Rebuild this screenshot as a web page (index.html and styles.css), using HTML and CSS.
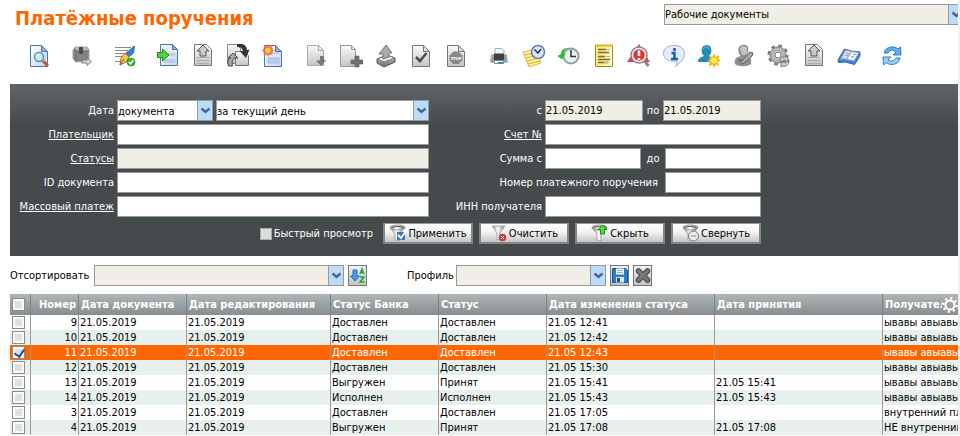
FILE: index.html
```html
<!DOCTYPE html>
<html lang="ru">
<head>
<meta charset="utf-8">
<title>Платёжные поручения</title>
<link rel="stylesheet" href="styles.css">
</head>
<body>
<svg class="defs" aria-hidden="true">
  <defs>
    <linearGradient id="gGray" x1="0" y1="0" x2="0" y2="1"><stop offset="0" stop-color="#fafafa"/><stop offset="1" stop-color="#c4c4c4"/></linearGradient>
    <linearGradient id="gDark" x1="0" y1="0" x2="0" y2="1"><stop offset="0" stop-color="#c8c8c8"/><stop offset="1" stop-color="#6c6c6c"/></linearGradient>
    <linearGradient id="gBlue" x1="0" y1="0" x2="1" y2="1"><stop offset="0" stop-color="#ffffff"/><stop offset="1" stop-color="#c3d4f0"/></linearGradient>
    <linearGradient id="gGold" x1="0" y1="0" x2="1" y2="0"><stop offset="0" stop-color="#f9e27a"/><stop offset="1" stop-color="#fffbe0"/></linearGradient>
    <linearGradient id="gFun" x1="0" y1="0" x2="1" y2="0"><stop offset="0" stop-color="#888"/><stop offset=".45" stop-color="#fff"/><stop offset="1" stop-color="#777"/></linearGradient>
    <symbol id="pageBlue" viewBox="0 0 24 24"><path d="M3.500 1.500h11l6 6v15h-17z" fill="url(#gBlue)" stroke="#5574a6"/><path d="M14.500 1.500v6h6z" fill="#8fb0e0" stroke="#5574a6"/></symbol>
    <symbol id="pageGray" viewBox="0 0 24 24"><path d="M3.500 1.500h11l6 6v15h-17z" fill="url(#gGray)" stroke="#777"/><path d="M14.500 1.500v6h6z" fill="#ddd" stroke="#777"/></symbol>
    <symbol id="upPage" viewBox="0 0 24 24"><path d="M3.500 .5h12l5 5v16h-17z" fill="url(#gGray)" stroke="#777"/><path d="M6 13.500h12M6 16.500h12M6 19.500h12" stroke="#aaa"/><path d="M12 1l6 6h-3v5H9V7H6z" fill="#c9c9c9" stroke="#555"/></symbol>
    <symbol id="chev" viewBox="0 0 14 19"><path d="M0 0h14v19H0z" fill="#b9dcfb"/><path d="M3.500 7.500L7.500 11l4-3.500" fill="none" stroke="#49658f" stroke-width="2.400"/></symbol>
    <symbol id="funnel" viewBox="0 0 18 18"><path d="M1 4l5 6v6l4 1v-7l6-6z" fill="url(#gFun)" stroke="#888" stroke-width=".6"/><ellipse cx="8.500" cy="3.500" rx="7.500" ry="2.500" fill="url(#gFun)" stroke="#999"/><path d="M3 3.500c3-1.500 8-1.500 11 0" stroke="#555" fill="none"/></symbol>
  </defs>
</svg>
<div class="page">
  <header class="top">
    <h1>Платёжные поручения</h1>
    <span class="pick pick-scope"><select class="field muted" aria-label="Раздел"><option>Рабочие документы</option></select><svg><use href="#chev"/></svg></span>
  </header>

  <nav class="tools" aria-label="Действия">
    <div><button type="button" aria-label="Просмотр"><svg viewBox="0 0 24 24"><use href="#pageBlue"/><path d="M15 16l6 6" stroke="#d8531c" stroke-width="3"/><path d="M15 15l2 2" stroke="#eaa040" stroke-width="3"/><circle cx="12" cy="13" r="4.500" fill="#c5ecfb" stroke="#5a8fc4" stroke-width="1.500"/><path d="M9.500 12a3 3 0 0 1 3-2" stroke="#fff" fill="none"/></svg></button></div>
    <div><button type="button" aria-label="Отправить"><svg viewBox="0 0 24 24"><path d="M5 3h12l2 3v11l-13 1-3-3V6z" fill="#858585" stroke="#a5a5a5"/><path d="M5 3h12l2 4H6z" fill="#b5b5b5"/><path d="M6 7v11M19 7H6L4 5" fill="none" stroke="#6a6a6a"/><path d="M9 3h4v7H9z" fill="#4d4d4d"/><path d="M12 16h5v-2.500l4.500 4-4.500 4V19h-5z" fill="#d4d4d4" stroke="#666" stroke-width=".8"/></svg></button></div>
    <div><button type="button" aria-label="Подписать"><svg viewBox="0 0 24 24"><path d="M2 3.500h16M2 6.500h13M2 9.500h10M2 12.500h7M2 17.500h6" stroke="#888"/><path d="M21.500 2l-1 7-5 4-3.500-3z" fill="#3d7fd0" stroke="#2a62ab"/><path d="M12 9l4 4-3 5-6 3 1-7z" fill="#f5c64a" stroke="#a8731d"/><path d="M7 21l4-6" stroke="#815412"/><circle cx="18" cy="18" r="4" fill="#35b13c" stroke="#218a2a" stroke-width=".6"/><path d="M15.800 18l1.700 1.800 2.800-3.500" fill="none" stroke="#fff" stroke-width="1.500"/></svg></button></div>
    <div>
      <button type="button" aria-label="Импорт"><svg viewBox="0 0 24 24"><path d="M4.500 .5h12l5 5v16h-17z" fill="url(#gBlue)" stroke="#5574a6"/><path d="M16.500 .5v5h5z" fill="#8fb0e0" stroke="#5574a6"/><path d="M12 9h7v3h-7zM8 15h11v4H8z" fill="#bccbe8"/><path d="M1.500 8.500h5V5l6.500 6-6.500 6v-3.500h-5z" fill="#4ed33a" stroke="#188c19"/></svg></button>
      <button type="button" aria-label="Экспорт"><svg viewBox="0 0 24 24"><use href="#upPage"/></svg></button>
      <button type="button" aria-label="Обмен"><svg viewBox="0 0 24 24"><path d="M1.500 .5h9l4 4v15h-13z" fill="url(#gGray)" stroke="#888"/><path d="M9.500 7.500h9l4 4v10h-13z" fill="url(#gGray)" stroke="#777"/><path d="M11 0c7-1 10 2 10 6l2.500-.5L20 14l-6-6.500 3-.5C16 4 14 2.500 11 3z" fill="#333"/><path d="M2.500 22c-1.500-6 .5-8 2.500-8H2l5-5 5 5H9c-2.500 0-3.500 4-2.500 8z" fill="#aaa" stroke="#444"/></svg></button>
      <button type="button" aria-label="Создать"><svg viewBox="0 0 24 24"><use href="#pageBlue"/><path d="M8 9h10M7 14h11v5H7z" fill="#bccbe8" stroke="#a6bbdf"/><circle cx="7" cy="6.500" r="5" fill="#f5552c" opacity=".85"/><path d="M7 0v13M.500 6.500h13M2.500 2l9 9M11.500 2l-9 9" stroke="#f88158"/><circle cx="7" cy="6.500" r="2.800" fill="#ffce35"/></svg></button>
    </div>
    <div>
      <button type="button" aria-label="Шаблон"><svg viewBox="0 0 24 24"><path d="M3.500 1.500h11l5 5v15h-16z" fill="url(#gGray)" stroke="#aaa"/><path d="M14.500 1.500v5h5z" fill="#eee" stroke="#aaa"/><path d="M16 12l4 0v4h2l-4.500 6-5.500-5 4-1z" fill="#777"/></svg></button>
      <button type="button" aria-label="Добавить"><svg viewBox="0 0 24 24"><path d="M1.500 1.500h11l4 4v17h-15z" fill="url(#gGray)" stroke="#999"/><path d="M12.500 1.500v4h4z" fill="#eee" stroke="#999"/><path d="M16 12h4v4h4v4h-4v3h-4v-3h-4v-4h4z" fill="#707070" stroke="#555" stroke-width=".6"/></svg></button>
      <button type="button" aria-label="Выгрузить"><svg viewBox="0 0 24 24"><path d="M3 15l10-4 8 3v4l-11 5-7-4z" fill="url(#gDark)" stroke="#555"/><path d="M3 15l7 3 11-4-8-3z" fill="#e8e8e8" stroke="#777"/><path d="M10 18v4.500" stroke="#777"/><path d="M12 1l6 8h-3v4l-6 2v-5H5z" fill="#aaa" stroke="#777"/></svg></button>
      <button type="button" aria-label="Проверить"><svg viewBox="0 0 24 24"><use href="#pageGray"/><path d="M7 13l4 4 6.500-8" fill="none" stroke="#4c4c4c" stroke-width="2.600"/></svg></button>
      <button type="button" aria-label="Отозвать"><svg viewBox="0 0 24 24"><use href="#pageGray"/><path d="M9.500 7.500h5L18.500 11.500v5L14.500 20h-5L5.500 16.500v-5z" fill="#888"/><text x="12" y="16" class="stop">STOP</text></svg></button>
    </div>
    <div>
      <button type="button" aria-label="Печать"><svg viewBox="0 0 24 24"><path d="M8 4.500h7l2 2v5H8z" fill="#e9f5fa" stroke="#9bb3bd"/><path d="M4.500 10.500h15l1 8h-17z" fill="#999" stroke="#bbb"/><path d="M7 9.500h10v7H7z" fill="#3b4046"/><path d="M7.500 16.500h9v3h-9z" fill="#f5fafd" stroke="#888"/><path d="M11 19h5" stroke="#2d8bc4" stroke-width="2"/></svg></button>
      <button type="button" aria-label="Отложить"><svg viewBox="0 0 24 24"><path d="M1 8l13-3 5 14-12 4z" fill="#fff0a0" stroke="#e3bb3a"/><path d="M3 11l11-3M4 14l12-3M5 17l12-3M6 20l12-3" stroke="#d9ae26"/><circle cx="16" cy="8" r="6.500" fill="#d9e5fb" stroke="#687bb5" stroke-width="1.500"/><path d="M12.500 5.500l3.500 3.500 3-4" fill="none" stroke="#29395f" stroke-width="1.500"/></svg></button>
      <button type="button" aria-label="История"><svg viewBox="0 0 24 24"><circle cx="14" cy="12" r="7.500" fill="#edf1ef" stroke="#93a5a2" stroke-width="2"/><path d="M14 6v6.500h5" fill="none" stroke="#333" stroke-width="1.500"/><path d="M11 4C8 5 6.500 7 6.500 10H8.500L5 15.500.5 12 4 10c0-4 3-6.500 7-6z" fill="#27bd35"/></svg></button>
      <button type="button" aria-label="Журнал"><svg viewBox="0 0 24 24"><path d="M3.500 1.500h17v21h-17z" fill="url(#gGold)" stroke="#a48a1b"/><path d="M3.500 1.500h17" stroke="#e3b90b" stroke-width="2"/><path d="M6 5.500h8M6 8.500h11M6 12.500h7M6 15.500h12M6 18.500h10" stroke="#806b25" stroke-width="1.500"/><path d="M14 5.500h4M14 12.500h4M12 18.500h5" stroke="#d2b84b"/></svg></button>
      <button type="button" aria-label="Ошибки"><svg viewBox="0 0 24 24"><path d="M12 0l11 18H0z" fill="#d8434a"/><path d="M17 16l4.500 6" stroke="#888" stroke-width="3"/><circle cx="12" cy="11" r="8" fill="#d43a41" stroke="#8c8c8c" stroke-width="1.500"/><circle cx="12" cy="11" r="6.500" fill="none" stroke="#eee" stroke-width="1.500"/><path d="M12 6.500v5.500M12 14v2" stroke="#fff" stroke-width="2.500"/></svg></button>
      <button type="button" aria-label="Информация"><svg viewBox="0 0 24 24"><path d="M12 1.500c6 0 10.500 3 10.500 8 0 6-5 10-9 13 2-3 2-4 1-5.500C6 18 1.500 14 1.500 9.500c0-5 4.500-8 10.500-8z" fill="#e8ebfd" stroke="#a3abd8"/><path d="M12.500 4v3M9.500 9h3v6M9 15h7" fill="none" stroke="#1760b8" stroke-width="2.500"/></svg></button>
      <button type="button" aria-label="Новый клиент"><svg viewBox="0 0 24 24"><path d="M1 18c0-4 3-5 6-6-2-2-3-4-2-8 1-4 8-4 9 0 1 4 0 6-2 8 3 1 5 3 5 6z" fill="#218db8"/><path d="M6 5c1-3 5-3 6 0" stroke="#6fc4df" fill="none"/><path d="M17 9l1.500 4 4-2-1.500 4 3 1.500-3.500 1.500 2 4-4-1.500L17 24l-1.500-3.500-4 1.500 1.500-4-3-1.500 3-1.500-1.500-4 4 2z" fill="#ffae12"/><circle cx="17" cy="16.500" r="3" fill="#fff06a"/></svg></button>
      <button type="button" aria-label="Клиент"><svg viewBox="0 0 24 24"><path d="M3 20c-1-5 1-7 6-8-3-2-3-7-2-9 2-3 8-3 9 0s0 7-2 9c4 1 6 3 5 8-3 3-13 3-16 0z" fill="#8e8e8e"/><path d="M8 4c2-3 6-2 7 0v5c-2 3-5 3-6 0z" fill="#c2c2c2"/><path d="M10 20l-3-5 3 2 8-9 3 1-1 3-9 8z" fill="#aaa" stroke="#5c5c5c"/></svg></button>
      <button type="button" aria-label="Настройки"><svg viewBox="0 0 24 24"><circle cx="11" cy="11" r="8.500" fill="none" stroke="#777" stroke-width="4" stroke-dasharray="3.340 3.340"/><circle cx="11" cy="11" r="6" fill="none" stroke="#b4b4b4" stroke-width="5"/><circle cx="11" cy="11" r="8" fill="none" stroke="#858585"/><circle cx="11" cy="11" r="3" fill="#fff" stroke="#777"/><path d="M13 17c0-3 3-5 6-4l1-1 2 5h-5l1-1c-2 0-2 1-2 2zM22 17c0 4-3 6-6 5l-2 1v-5h5l-1 1c1 0 2-1 2-2z" fill="#ccc" stroke="#666" stroke-width=".8"/></svg></button>
      <button type="button" aria-label="Выгрузка"><svg viewBox="0 0 24 24"><use href="#upPage"/></svg></button>
      <button type="button" aria-label="Справочник"><svg viewBox="0 0 24 24"><path d="M1 16L7.500 5l7 2 8.500 1v4l-5.500 8.500-9-2.500-7 .5z" fill="#3c83d8" stroke="#2a61b1"/><path d="M8.500 6l6 1.500-5 8c-2-1-4-1-6 0z" fill="#dde3f3" stroke="#8e9fca"/><path d="M14.500 7.500l7.500 1-5 8.500c-3-1-5-1-7.500-1.500z" fill="#f0f3fc" stroke="#8e9fca"/><path d="M9 9l3 1M8 11l3 1M16 10l3 .5M14 12.500l3 .5" stroke="#99a"/></svg></button>
    </div>
    <div><button type="button" aria-label="Обновить"><svg viewBox="0 0 24 24"><path d="M4 9c1-6 10-8 14-4l2.500-2L21 11h-8l3-3c-3-3-6-2-8 1z" fill="#63adeb" stroke="#2f7ac5"/><path d="M20 14c-1 7-10 8-14 4.500L3.500 21 3 13h8l-3 3c3 2 6 1 8-2z" fill="#9bcdf5" stroke="#2f7ac5"/></svg></button></div>
  </nav>

  <form class="filter">
    <div class="grid">
      <label for="dkind">Дата</label>
      <div class="cell">
        <span class="pick pick-kind"><select class="field" id="dkind"><option>документа</option></select><svg><use href="#chev"/></svg></span>
        <span class="pick pick-period"><select class="field" aria-label="Период"><option>за текущий день</option></select><svg><use href="#chev"/></svg></span>
      </div>
      <label for="from">с</label>
      <div class="cell spread"><input class="field muted date" id="from" value="21.05.2019"><label for="till">по</label><input class="field muted date" id="till" value="21.05.2019"></div>

      <a href="#payer">Плательщик</a>
      <input class="field" id="payer" aria-label="Плательщик">
      <a href="#account">Счет №</a>
      <input class="field" id="account" aria-label="Счет №">

      <a href="#statuses">Статусы</a>
      <input class="field muted" id="statuses" aria-label="Статусы">
      <label for="sum1">Сумма с</label>
      <div class="cell spread"><input class="field sum" id="sum1"><label for="sum2">до</label><input class="field sum" id="sum2"></div>

      <label for="docid">ID документа</label>
      <input class="field" id="docid">
      <div class="cell wide"><label for="num">Номер платежного поручения</label><input class="field sum" id="num"></div>

      <a href="#mass">Массовый платеж</a>
      <input class="field" id="mass" aria-label="Массовый платеж">
      <label for="inn">ИНН получателя</label>
      <input class="field" id="inn">
    </div>
    <div class="actions">
      <label class="quick"><input type="checkbox" class="tick">Быстрый просмотр</label>
      <button type="button" class="btn"><svg viewBox="0 0 18 18"><use href="#funnel"/><path d="M8 8h8v8H8z" fill="#3478c8"/><path d="M9 11l3 3 5-7" fill="none" stroke="#fff" stroke-width="2"/></svg>Применить</button>
      <button type="button" class="btn"><svg viewBox="0 0 18 18"><path d="M2 2h13l-5 7v6l-3 1V9z" fill="url(#gFun)" stroke="#aaa"/><circle cx="12.500" cy="13.500" r="3.800" fill="#c93b3b"/><path d="M11 12l3 3M14 12l-3 3" stroke="#fff"/></svg>Очистить</button>
      <button type="button" class="btn"><svg viewBox="0 0 18 18"><use href="#funnel"/><path d="M11.500 1l4.500 4.500h-2.500V10h-4V5.500H7z" fill="#5add3c" stroke="#0e9416"/></svg>Скрыть</button>
      <button type="button" class="btn"><svg viewBox="0 0 18 18"><use href="#funnel"/><circle cx="11.500" cy="12" r="5" fill="#e9e9e9" stroke="#777"/><path d="M9 12h5" stroke="#888"/></svg>Свернуть</button>
    </div>
  </form>

  <div class="sorting">
    <label for="sort">Отсортировать</label>
    <span class="pick pick-sort"><select class="field muted" id="sort"></select><svg><use href="#chev"/></svg></span>
    <button type="button" class="sq" aria-label="Сортировать"><svg viewBox="0 0 16 17"><path d="M3 3h4v6h2.500L5 14 .500 9H3z" fill="#4d9bee" stroke="#2869c0"/><path d="M10 7l2-5 2 5M10.500 5.500h3M10 10h4l-4 5h4.500" fill="none" stroke="#25a336" stroke-width="1.500"/></svg></button>
    <label class="profile" for="prof">Профиль</label>
    <span class="pick pick-prof"><select class="field muted" id="prof"></select><svg><use href="#chev"/></svg></span>
    <button type="button" class="sq" aria-label="Сохранить"><svg viewBox="0 0 16 17"><path d="M.5 1.500h13l2 2v12H.5z" fill="#2b7bd0" stroke="#16559f"/><path d="M4 1.500h8v6H4z" fill="#f5f8fb"/><path d="M5 3.500h6M5 5.500h6" stroke="#aab"/><path d="M4 10h8v5.500H4z" fill="#d8e4f0"/><path d="M5 11h3v4H5z" fill="#1e4e8c"/></svg></button>
    <button type="button" class="sq" aria-label="Удалить"><svg viewBox="0 0 16 17"><path d="M3.500 4l9 9M12.500 4l-9 9" stroke="#444" stroke-width="5.500" stroke-linecap="round"/><path d="M3.500 4l9 9M12.500 4l-9 9" stroke="#777" stroke-width="3.500" stroke-linecap="round"/></svg></button>
  </div>

  <div class="listing">
  <table>
    <colgroup><col class="c-tick"><col class="c-num"><col class="c-m"><col class="c-edit"><col class="c-m"><col class="c-m"><col class="c-change"><col class="c-change"><col></colgroup>
    <thead><tr><th><input type="checkbox" class="box" aria-label="Выбрать все"></th><th class="r">Номер</th><th>Дата документа</th><th>Дата редактирования</th><th>Статус Банка</th><th>Статус</th><th>Дата изменения статуса</th><th>Дата принятия</th><th><div class="last"><span>Получатель</span><button type="button" aria-label="Колонки"><svg viewBox="0 0 16 16"><circle cx="8" cy="8" r="4.500" fill="none" stroke="#fff" stroke-width="2"/><circle cx="8" cy="8" r="6.700" fill="none" stroke="#fff" stroke-width="2.400" stroke-dasharray="2.200 3.060"/></svg></button></div></th></tr></thead>
    <tbody>
      <tr><td><input type="checkbox" class="box" aria-label="9"></td><td class="r">9</td><td>21.05.2019</td><td>21.05.2019</td><td>Доставлен</td><td>Доставлен</td><td>21.05 12:41</td><td></td><td>ывавы авыавы</td></tr>
      <tr><td><input type="checkbox" class="box" aria-label="10"></td><td class="r">10</td><td>21.05.2019</td><td>21.05.2019</td><td>Доставлен</td><td>Доставлен</td><td>21.05 12:42</td><td></td><td>ывавы авыавы</td></tr>
      <tr class="on"><td><input type="checkbox" class="box" aria-label="11" checked></td><td class="r">11</td><td>21.05.2019</td><td>21.05.2019</td><td>Доставлен</td><td>Доставлен</td><td>21.05 12:43</td><td></td><td>ывавы авыавы</td></tr>
      <tr><td><input type="checkbox" class="box" aria-label="12"></td><td class="r">12</td><td>21.05.2019</td><td>21.05.2019</td><td>Доставлен</td><td>Доставлен</td><td>21.05 15:30</td><td></td><td>ывавы авыавы</td></tr>
      <tr><td><input type="checkbox" class="box" aria-label="13"></td><td class="r">13</td><td>21.05.2019</td><td>21.05.2019</td><td>Выгружен</td><td>Принят</td><td>21.05 15:41</td><td>21.05 15:41</td><td>ывавы авыавы</td></tr>
      <tr><td><input type="checkbox" class="box" aria-label="14"></td><td class="r">14</td><td>21.05.2019</td><td>21.05.2019</td><td>Исполнен</td><td>Исполнен</td><td>21.05 15:43</td><td>21.05 15:43</td><td>ывавы авыавы</td></tr>
      <tr><td><input type="checkbox" class="box" aria-label="3"></td><td class="r">3</td><td>21.05.2019</td><td>21.05.2019</td><td>Доставлен</td><td>Доставлен</td><td>21.05 17:05</td><td></td><td>внутренний платеж</td></tr>
      <tr><td><input type="checkbox" class="box" aria-label="4"></td><td class="r">4</td><td>21.05.2019</td><td>21.05.2019</td><td>Выгружен</td><td>Принят</td><td>21.05 17:08</td><td>21.05 17:08</td><td>НЕ внутренний</td></tr>
    </tbody>
  </table>
  </div>
</div>
</body>
</html>
```
FILE: styles.css
```css
* { box-sizing: border-box; }

body {
  margin: 0;
  background: #fff;
  color: #000;
  font: 11px/15px "DejaVu Sans Condensed", "Noto Sans", sans-serif;
}

button, input, select { margin: 0; font: inherit; color: inherit; }
.defs { position: absolute; width: 0; height: 0; }
.page { padding-left: 10px; border-right: 2px solid #f0f0f0; overflow: hidden; }

.top { display: flex; justify-content: space-between; align-items: flex-start; padding-top: 4px; }
h1 {
  margin: 0;
  padding-left: 5px;
  color: #f60;
  font: bold 20px/28px "DejaVu Sans Condensed", sans-serif;
}

.tools { display: flex; gap: 8px; margin-left: 11px; padding: 12px 0 16px; }
.tools div { display: flex; }
.tools button { display: flex; justify-content: center; width: 35px; padding: 0; border: 0; background: none; }
.tools svg { width: 24px; height: 24px; }
.stop { fill: #fff; font-size: 4px; font-weight: bold; text-anchor: middle; }

.field {
  display: block;
  width: 100%;
  height: 21px;
  padding: 0;
  border: 1px solid #999;
  border-radius: 0;
  background: #fff;
  color: #000;
  outline: 0;
  appearance: none;
}
.muted { background: #f1eee7; }

.pick { position: relative; display: block; }
.pick svg { position: absolute; top: 1px; right: 1px; width: 15px; height: 19px; border-left: 1px solid #999; pointer-events: none; }
.pick-scope { width: 300px; margin-right: -6px; }
.pick-kind { width: 96px; }
.pick-period { width: 213px; }
.pick-sort { width: 250px; }
.pick-prof { width: 150px; }

.filter {
  padding: 16px 0 12px;
  background: linear-gradient(#5f6468, #454a4d 42px);
  color: #fff;
}
.grid {
  display: grid;
  grid-template-columns: 104px 312px 110px 216px;
  column-gap: 3px;
  row-gap: 3px;
  width: 751px;
}
.grid > label, .grid > a { text-align: right; line-height: 21px; white-space: nowrap; }
.grid > a { color: #fff; }
.cell { display: flex; gap: 3px; line-height: 21px; }
.spread { justify-content: space-between; }
.spread label { flex: 1; text-align: center; }
.date { width: 98px; }
.sum { width: 96px; }
.wide { grid-column: 3 / 5; justify-content: flex-end; gap: 7px; }

.actions { display: flex; justify-content: flex-end; align-items: center; gap: 6px; width: 751px; margin-top: 6px; }
.quick { display: flex; align-items: center; gap: 2px; margin-right: 4px; }
.tick { width: 12px; height: 12px; border: 1px solid #aaa; background: #ddd; appearance: none; }
.btn {
  display: flex;
  justify-content: center;
  align-items: center;
  gap: 1px;
  width: 90px;
  height: 21px;
  padding: 0;
  border: 2px solid #858585;
  border-top: 1px solid #999;
  background: linear-gradient(#fff, #f0f0f0 50%, #c4c4c4);
  color: #000;
}
.btn svg { flex: none; width: 18px; height: 18px; }

.sorting { display: flex; align-items: center; gap: 4px; padding: 9px 0 8px; }
.sorting label { width: 80px; }
.sorting .profile { width: 81px; padding-left: 36px; }
.sq { display: flex; justify-content: center; align-items: center; width: 19px; height: 21px; padding: 0; border: 1px solid #777; background: linear-gradient(#f2f2f2, #c4c4c4); }
.sq svg { width: 16px; height: 17px; }

.listing { overflow: hidden; }
table { width: 100%; table-layout: fixed; border-collapse: separate; border-spacing: 0; }
.c-tick { width: 20px; }
.c-num { width: 48px; }
.c-m { width: 108px; }
.c-edit { width: 144px; }
.c-change { width: 168px; }
th, td { height: 15px; padding: 0 1px; border-left: 1px solid #999; text-align: left; white-space: nowrap; overflow: hidden; line-height: 15px; }
th { height: 21px; padding: 0 2px; border-color: #7d8285; background: linear-gradient(#b0b5b8, #888d90); color: #fff; font-weight: bold; }
th:first-child, td:first-child { padding-left: 2px; border-left: 0; line-height: 0; }
td:last-child, th:last-child { padding-right: 0; }
.r { text-align: right; }
tbody tr:nth-child(even) { background: #e8f0ed; }
tbody tr.on { background: #f60; color: #fff; }
.box { display: block; width: 13px; height: 13px; border: 1px solid #8a8d8f; background: #e0e0e0; box-shadow: inset 0 0 0 2px #fafafa; appearance: none; }
.box:checked::after { content: ""; display: block; width: 5px; height: 8px; margin: 0 0 0 3px; border: solid #2b4c94; border-width: 0 2px 2px 0; transform: rotate(35deg); }
.last { display: flex; align-items: center; }
.last span { flex: 1; min-width: 0; overflow: hidden; }
.last button { display: flex; flex: none; padding: 0; border: 0; background: none; }
.last svg { width: 16px; height: 16px; }
```
